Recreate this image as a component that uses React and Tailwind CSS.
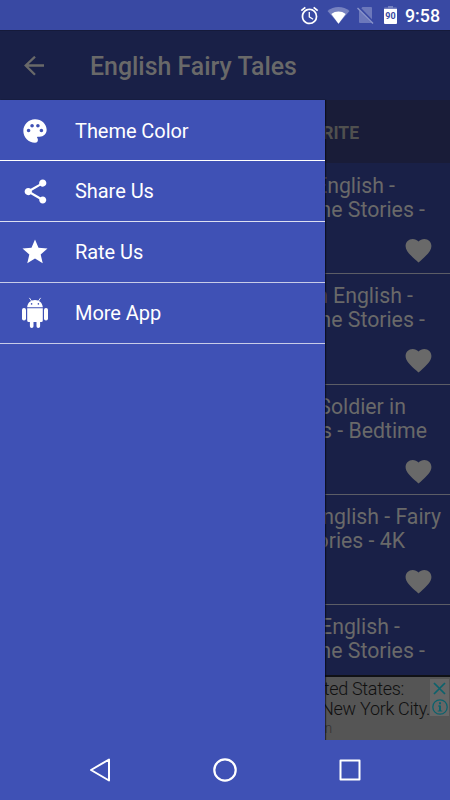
import {MdPalette, MdShare, MdStar, MdFavorite, MdAlarm} from "react-icons/md";

const menuItems = [
    {id: 1, title: "Theme Color", Icon: MdPalette, size: 28, row: "h-[61px] pt-px border-white"},
    {id: 2, title: "Share Us", Icon: MdShare, size: 29, row: "h-[61px] border-[#dcdff1]"},
    {id: 3, title: "Rate Us", Icon: MdStar, size: 30, row: "h-[61px] border-[#c8cce8]"},
    {id: 4, title: "More App", Icon: null, size: 30, row: "h-[61px] border-[#c8cce8]"}
];

const stories = [
    {id: 1, first: "English -", second: "me Stories -", firstPad: "pr-[55px]", secondPad: "pr-[25px]", row: "h-[111px] pt-[11px]"},
    {id: 2, first: "in English -", second: "me Stories -", firstPad: "pr-[37px]", secondPad: "pr-[25px]", row: "h-[111px] pt-[10px]"},
    {id: 3, first: "Soldier in", second: "s - Bedtime", firstPad: "pr-[44px]", secondPad: "pr-[23px]", row: "h-[110px] pt-[10px]"},
    {id: 4, first: "English - Fairy", second: "ories - 4K", firstPad: "pr-[9px]", secondPad: "pr-[45px]", row: "h-[110px] pt-[10px]"},
    {id: 5, first: "English -", second: "me Stories -", firstPad: "pr-[50px]", secondPad: "pr-[25px]", row: "h-[72px] pt-[10px]"}
];

const AndroidRobot = () => (
    <svg width="28" height="32" viewBox="0 0 28 32" fill="#fff">
        <path d="M8.6 1.2l1.9 2.8M19.4 1.2l-1.9 2.8" stroke="#fff" strokeWidth="0.9" strokeLinecap="round"/>
        <path fillRule="evenodd" d="M6.2 10.3C6.4 5.9 9.7 2.9 14 2.9s7.6 3 7.8 7.4zM10.6 6.1a.8.8 0 100 1.6.8.8 0 000-1.6zm6.8 0a.8.8 0 100 1.6.8.8 0 000-1.6z"/>
        <path d="M6.2 11.3h15.6v12.2a1.6 1.6 0 01-1.6 1.6h-1.1v4.1a1.8 1.8 0 01-3.6 0v-4.1h-3v4.1a1.8 1.8 0 01-3.6 0v-4.1H7.8a1.6 1.6 0 01-1.6-1.6z"/>
        <rect x="1" y="11" width="4" height="12.4" rx="1.9"/>
        <rect x="23" y="11" width="4" height="12.4" rx="1.9"/>
    </svg>
);

const StatusBar = () => (
    <div className="flex h-[30px] items-center bg-[#3949a3] pl-[299px] text-white">
        <MdAlarm size={21}/>
        <svg className="ml-[7px]" width="23" height="18" viewBox="0 0 23 18">
            <path d="M0.5 5C6.5-0.4 16.5-0.4 22.5 5L11.5 17.8z" fill="#7782c0"/>
            <path d="M4.3 8C8.5 4.7 14.5 4.7 18.7 8L11.5 17.8z" fill="#fff"/>
        </svg>
        <svg className="ml-[7px]" width="18" height="18" viewBox="0 0 18 18">
            <path d="M5.5 1H14a1 1 0 011 1v14a1 1 0 01-1 1H3a1 1 0 01-1-1V4.5z" fill="#6c78bb"/>
            <path d="M1 1L16 16.5" stroke="#3949a3" strokeWidth="3"/>
            <path d="M0.5 2L16 17.5" stroke="#8a94ca" strokeWidth="1.4"/>
        </svg>
        <svg className="ml-[9px]" width="13" height="18" viewBox="0 0 13 18">
            <path d="M4 0h5v1.5h3a1 1 0 011 1V5H0V2.5a1 1 0 011-1h3z" fill="#7782c0"/>
            <path d="M0 3h13v14a1 1 0 01-1 1H1a1 1 0 01-1-1z" fill="#fff"/>
            <text x="6.5" y="12.5" fontSize="9" fontWeight="700" textAnchor="middle" fill="#3949a3">90</text>
        </svg>
        <span className="ml-2 pt-px text-[17.8px] font-medium leading-none">9:58</span>
    </div>
);

const Drawer = () => (
    <div className="z-10 w-[325px] shrink-0 bg-[#3f51b5] shadow-[1px_0_1px_rgba(0,0,0,0.5)]">
        {menuItems.map(({id, title, Icon, size, row}) => (
            <div key={id} className={`flex items-center border-b text-[20px] text-white ${row}`}>
                <div className="flex w-[75px] justify-center pr-[5px]">
                    {Icon ? <Icon size={size}/> : <AndroidRobot/>}
                </div>
                <span className="tracking-[-0.05px]">{title}</span>
            </div>
        ))}
    </div>
);

const Stories = () => (
    <div className="flex w-[125px] flex-col overflow-hidden bg-[#192047] text-[#696969]">
        <div className="flex h-[63px] shrink-0 items-center justify-end bg-[#191c38] pr-[91px] pt-[3px] text-[17.5px] font-bold text-[#50504f]">
            FAVORITE
        </div>
        {stories.map((item) => (
            <div key={item.id} className={`shrink-0 overflow-hidden whitespace-nowrap text-[21.25px] leading-6 ${item.row} ${item.id < 5 ? "border-b border-[#5c5d66]" : "border-b-2 border-[#101116]"}`}>
                <div className={`flex justify-end ${item.firstPad}`}>{item.first}</div>
                <div className={`flex justify-end ${item.secondPad}`}>{item.second}</div>
                {item.id < 5 && <MdFavorite className="ml-[78px] mt-[13px]" size={31}/>}
            </div>
        ))}
        <Ad/>
    </div>
);

const Ad = () => (
    <div className="relative grow overflow-hidden whitespace-nowrap bg-[#555] pt-[2px] text-[18px] font-light leading-5 tracking-[-0.3px] text-[#101010]">
        <div className="flex justify-end pr-[46px]">ted States:</div>
        <div className="flex justify-end pr-[20px]">New York City.</div>
        <div className="flex justify-end pr-[118px] pt-px text-[14px] leading-4 text-[#333]">n</div>
        <div className="absolute right-px top-[2px] flex h-[37px] w-[19px] flex-col items-center justify-between bg-[#666] pb-px pt-[3px]">
            <svg width="13" height="13" viewBox="0 0 13 13" fill="none" stroke="#0b626d" strokeWidth="1.7">
                <path d="M1 1l11 11M12 1L1 12"/>
            </svg>
            <svg width="16" height="16" viewBox="0 0 16 16" fill="none" stroke="#0b626d">
                <circle cx="8" cy="8" r="7.2" strokeWidth="1.3"/>
                <path d="M8 3.2v2" strokeWidth="2"/>
                <path d="M8 6.5v5.5" strokeWidth="2"/>
                <path d="M6 7h2M5.7 12h4.6" strokeWidth="1"/>
            </svg>
        </div>
    </div>
);

const NavBar = () => (
    <div className="z-20 flex h-[60px] items-center bg-[#3f51b5] pl-[89px]">
        <svg width="24" height="26" viewBox="0 0 24 26" fill="none" stroke="#fff" strokeWidth="2" strokeLinejoin="round">
            <path d="M2 13L20 2.5v21z"/>
        </svg>
        <svg className="ml-[99px]" width="26" height="26" viewBox="0 0 26 26" fill="none" stroke="#fff" strokeWidth="2.2">
            <circle cx="13" cy="13" r="10.7"/>
        </svg>
        <svg className="ml-[100px]" width="24" height="24" viewBox="0 0 24 24" fill="none" stroke="#fff" strokeWidth="2" strokeLinejoin="round">
            <rect x="2.5" y="2.5" width="19" height="19"/>
        </svg>
    </div>
);

const App = () => {
    return (
        <div className="flex h-[800px] w-[450px] flex-col overflow-hidden font-['Roboto',sans-serif]">
            <StatusBar/>
            <div className="flex h-[70px] items-center border-t border-[#151a3a] bg-[#192047] text-[#696969]">
                <svg className="ml-[24px]" width="20" height="20" viewBox="0 0 20 20" fill="none" stroke="currentColor" strokeWidth="2.3">
                    <path d="M20 9.5H1.5M11 0.7L1.7 9.5L11 18.8"/>
                </svg>
                <h1 className="ml-[46px] pt-[3px] text-[24.9px] font-medium leading-none">English Fairy Tales</h1>
            </div>
            <div className="flex h-[640px]">
                <Drawer/>
                <Stories/>
            </div>
            <NavBar/>
        </div>
    )
}

export default App;
